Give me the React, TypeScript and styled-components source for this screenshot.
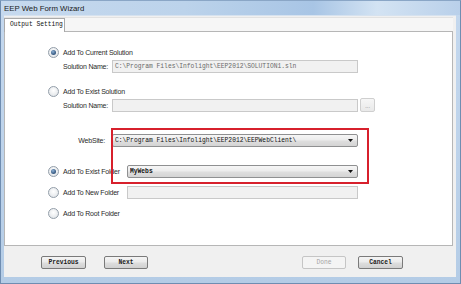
import React from "react";
import styled, { createGlobalStyle } from "styled-components";

const Global = createGlobalStyle`
  html, body { margin: 0; padding: 0; background: #ffffff; }
  * { box-sizing: border-box; }
`;

const Window = styled.div`
  width: 461px;
  height: 284px;
  display: flex;
  flex-direction: column;
  background: linear-gradient(180deg, #c4d8ee 0%, #bcd2ea 60%, #b4cce6 100%);
  border: 1px solid #6f8db1;
  border-top-color: #8aa6c6;
  overflow: hidden;
`;

const TitleBar = styled.div`
  height: 14px;
  flex: none;
  display: flex;
  align-items: center;
  padding-left: 3px;
  background: linear-gradient(90deg, #c6d9ee 0%, #bcd3eb 40%, #a8c5e5 68%, #d3e3f3 82%, #b9d0ea 100%);
  font-family: "Liberation Sans", Arial, sans-serif;
  font-size: 7.8px;
  color: #1a1a1a;
`;

const Body = styled.div`
  flex: 1;
  margin: 0 4px 6px 3px;
  display: flex;
  flex-direction: column;
  background: #f0f0f0;
  border-top: 1px solid #d6e2ef;
`;

const TabStrip = styled.div`
  height: 15px;
  flex: none;
  display: flex;
  align-items: flex-end;
  margin-right: 3px;
  background: linear-gradient(180deg, #f0f0f0 0px, #f0f0f0 1px, #e2e2e2 1px, #e2e2e2 2px, #f6f6f6 2px);
`;

const Tab = styled.div`
  width: 61px;
  height: 14px;
  margin-bottom: -1px;
  padding: 2px 0 0 5px;
  background: #ffffff;
  border: 1px solid #a9a9a9;
  border-bottom: none;
  font-family: "Liberation Mono", "Courier New", monospace;
  font-size: 6.3px;
  color: #111;
  position: relative;
  z-index: 1;
`;

const TabPage = styled.div`
  height: 215px;
  flex: none;
  margin-right: 3px;
  background: #ffffff;
  border: 1px solid #b6b6b6;
  position: relative;
  padding: 14px 0 0 43px;
  display: flex;
  flex-direction: column;
  font-family: "Liberation Sans", Arial, sans-serif;
  font-size: 7px;
  letter-spacing: -0.2px;
  color: #2a2a2a;
`;

const Row = styled.div<{ $top: number; $h?: number }>`
  display: flex;
  align-items: center;
  height: ${(p) => p.$h ?? 13}px;
  margin-top: ${(p) => p.$top}px;
`;

const Radio = styled.span<{ $checked?: boolean }>`
  width: 11px;
  height: 11px;
  flex: none;
  border-radius: 50%;
  border: 1px solid #939ea9;
  background: radial-gradient(circle at 50% 40%, #ffffff 0%, #e6e9ec 70%, #d2d7dc 100%);
  display: flex;
  align-items: center;
  justify-content: center;
  margin-right: 4px;
  &::after {
    content: "";
    display: ${(p) => (p.$checked ? "block" : "none")};
    width: 5px;
    height: 5px;
    border-radius: 50%;
    background: radial-gradient(circle at 40% 35%, #8fb2d6 0%, #3b5e86 60%, #2b4a70 100%);
  }
`;

const Label = styled.span<{ $w: number; $right?: boolean }>`
  width: ${(p) => p.$w}px;
  flex: none;
  text-align: ${(p) => (p.$right ? "right" : "left")};
  padding-right: ${(p) => (p.$right ? 7 : 0)}px;
  white-space: nowrap;
`;

const TextBox = styled.div<{ $w: number }>`
  width: ${(p) => p.$w}px;
  height: 13px;
  flex: none;
  display: flex;
  align-items: center;
  padding-left: 2px;
  background: #f1f1f1;
  border: 1px solid #c9c9c9;
  font-family: "Liberation Mono", "Courier New", monospace;
  font-size: 6.3px;
  letter-spacing: 0;
  color: #6a6a6a;
  white-space: nowrap;
  overflow: hidden;
`;

const SmallButton = styled.div`
  width: 15px;
  height: 14px;
  margin-left: 2px;
  flex: none;
  border: 1px solid #cfcfcf;
  border-radius: 2px;
  background: linear-gradient(180deg, #f6f6f6, #e9e9e9);
  color: #a8a8a8;
  font-size: 7px;
  display: flex;
  align-items: center;
  justify-content: center;
`;

const Select = styled.div<{ $w: number; $bold?: boolean }>`
  width: ${(p) => p.$w}px;
  height: 13px;
  flex: none;
  display: flex;
  align-items: center;
  padding: 0 4px 0 2px;
  border: 1px solid #8f9091;
  border-radius: 2px;
  background: linear-gradient(180deg, #f6f6f6 0%, #ececec 45%, #dedede 55%, #d4d4d4 100%);
  font-family: "Liberation Mono", "Courier New", monospace;
  font-size: 6.3px;
  letter-spacing: 0;
  font-weight: ${(p) => (p.$bold ? 700 : 400)};
  color: #111;
  white-space: nowrap;
`;

const SelectText = styled.span`
  flex: 1;
  overflow: hidden;
`;

const Arrow = styled.svg`
  width: 5px;
  height: 3px;
  flex: none;
`;

const Highlight = styled.div`
  position: absolute;
  left: 106px;
  top: 96px;
  width: 258px;
  height: 56px;
  border: 2px solid #d7202c;
  pointer-events: none;
`;

const Footer = styled.div`
  flex: 1;
  display: flex;
  justify-content: space-between;
  align-items: flex-start;
  padding: 10px 53px 0 37px;
`;

const ButtonGroup = styled.div<{ $gap: number }>`
  display: flex;
  gap: ${(p) => p.$gap}px;
`;

const Button = styled.div<{ $w: number; $disabled?: boolean }>`
  width: ${(p) => p.$w}px;
  height: 13px;
  display: flex;
  align-items: center;
  justify-content: center;
  border: 1px solid ${(p) => (p.$disabled ? "#c5c5c5" : "#7a7a7a")};
  border-radius: 2px;
  background: ${(p) =>
    p.$disabled
      ? "#f4f4f4"
      : "linear-gradient(180deg, #f4f4f4 0%, #ebebeb 45%, #dddddd 55%, #d1d1d1 100%)"};
  font-family: "Liberation Mono", "Courier New", monospace;
  font-size: 6.3px;
  font-weight: ${(p) => (p.$disabled ? 400 : 700)};
  color: ${(p) => (p.$disabled ? "#a4a4a4" : "#1a1a1a")};
`;

const DownArrow = () => (
  <Arrow viewBox="0 0 5 3">
    <path d="M0 0 H5 L2.5 3 Z" fill="#111" />
  </Arrow>
);

export default function App() {
  return (
    <>
      <Global />
      <Window>
        <TitleBar>EEP Web Form Wizard</TitleBar>
        <Body>
          <TabStrip>
            <Tab>Output Setting</Tab>
          </TabStrip>
          <TabPage>
            <Row $top={0} $h={12}>
              <Radio $checked />
              <span>Add To Current Solution</span>
            </Row>
            <Row $top={2}>
              <Label $w={15} />
              <Label $w={49}>Solution Name:</Label>
              <TextBox $w={246}>C:\Program Files\Infolight\EEP2012\SOLUTION1.sln</TextBox>
            </Row>
            <Row $top={12} $h={12}>
              <Radio />
              <span>Add To Exist Solution</span>
            </Row>
            <Row $top={1} $h={14}>
              <Label $w={15} />
              <Label $w={49}>Solution Name:</Label>
              <TextBox $w={246} />
              <SmallButton>...</SmallButton>
            </Row>
            <Row $top={22}>
              <Label $w={64} $right>WebSite:</Label>
              <Select $w={246}>
                <SelectText>C:\Program Files\Infolight\EEP2012\EEPWebClient\</SelectText>
                <DownArrow />
              </Select>
            </Row>
            <Row $top={18}>
              <Radio $checked />
              <Label $w={64}>Add To Exist Folder</Label>
              <Select $w={231} $bold>
                <SelectText>MyWebs</SelectText>
                <DownArrow />
              </Select>
            </Row>
            <Row $top={8}>
              <Radio />
              <Label $w={64}>Add To New Folder</Label>
              <TextBox $w={231} />
            </Row>
            <Row $top={8} $h={12}>
              <Radio />
              <span>Add To Root Folder</span>
            </Row>
            <Highlight />
          </TabPage>
          <Footer>
            <ButtonGroup $gap={18}>
              <Button $w={45}>Previous</Button>
              <Button $w={44}>Next</Button>
            </ButtonGroup>
            <ButtonGroup $gap={12}>
              <Button $w={44} $disabled>Done</Button>
              <Button $w={45}>Cancel</Button>
            </ButtonGroup>
          </Footer>
        </Body>
      </Window>
    </>
  );
}
